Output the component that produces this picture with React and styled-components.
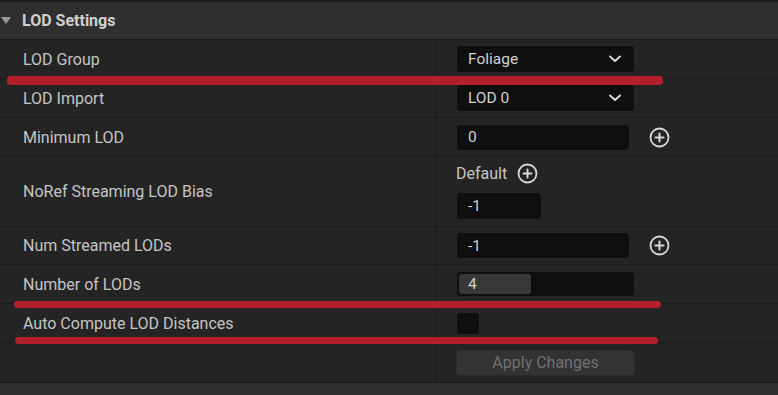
import styled, { createGlobalStyle } from "styled-components";

const GlobalStyle = createGlobalStyle`
  html, body {
    margin: 0;
    padding: 0;
    background: #242424;
  }
  body {
    font-family: Roboto, "Noto Sans", sans-serif;
    color: #c0c0c0;
  }
`;

const Panel = styled.div`
  position: relative;
  width: 778px;
  height: 395px;
  overflow: hidden;
  background: #242424;
  border-top: 2px solid #1c1c1c;
  box-sizing: border-box;
`;

const SectionHeader = styled.div`
  display: flex;
  align-items: center;
  gap: 11px;
  height: ${(p) => p.$height}px;
  padding-left: 1px;
  background: #2f2f2f;
  border-bottom: 1px solid #1b1b1b;
  font-size: 16px;
  font-weight: 700;
  color: #cfcfcf;
  box-sizing: border-box;
`;

const Arrow = styled.span`
  width: 0;
  height: 0;
  border-left: 5px solid transparent;
  border-right: 5px solid transparent;
  border-top: 7px solid #9a9a9a;
`;

const Row = styled.div`
  display: grid;
  grid-template-columns: 437px 1fr;
  height: ${(p) => p.$height}px;
  border-bottom: 1px solid #1b1b1b;
  box-sizing: border-box;
`;

const Label = styled.div`
  display: flex;
  align-items: center;
  padding-left: 23px;
  border-right: 1px solid #1b1b1b;
  font-size: 16px;
  color: #c4c4c4;
`;

const Value = styled.div`
  display: flex;
  flex-direction: ${(p) => (p.$column ? "column" : "row")};
  align-items: ${(p) => (p.$column ? "flex-start" : "center")};
  justify-content: ${(p) => (p.$column ? "center" : "flex-start")};
  gap: ${(p) => (p.$column ? "8px" : "19px")};
  padding-left: 19px;
`;

const Field = styled.div`
  position: relative;
  display: flex;
  align-items: center;
  justify-content: space-between;
  width: ${(p) => p.$width}px;
  height: ${(p) => p.$height || 28}px;
  padding: 0 12px 0 11px;
  background: #0f0f0f;
  border: 1px solid #262626;
  border-radius: 4px;
  box-sizing: border-box;
  font-size: 15.5px;
  color: #d0d0d0;
  overflow: hidden;
`;

const SliderFill = styled.div`
  position: absolute;
  left: 2px;
  top: 2px;
  bottom: 2px;
  background: #383838;
  border-radius: 3px;
`;

const SliderText = styled.span`
  position: relative;
`;

const Checkbox = styled.div`
  width: 24px;
  height: 23px;
  background: #0f0f0f;
  border: 1px solid #262626;
  border-radius: 3px;
  box-sizing: border-box;
`;

const Button = styled.div`
  display: flex;
  align-items: center;
  justify-content: center;
  width: 179px;
  height: 26px;
  background: #333333;
  border: 1px solid #2a2a2a;
  border-radius: 4px;
  box-sizing: border-box;
  font-size: 16px;
  color: #707070;
`;

const DefaultLine = styled.div`
  display: flex;
  align-items: center;
  gap: 10px;
  font-size: 16px;
  color: #c4c4c4;
`;

const Mark = styled.div`
  position: absolute;
  left: ${(p) => p.$left}px;
  top: ${(p) => p.$top}px;
  width: ${(p) => p.$width}px;
  height: ${(p) => p.$height}px;
  background: #b3202c;
  border-radius: 4px;
`;

function Chevron() {
  return (
    <svg width="14" height="10" viewBox="0 0 14 10">
      <path d="M2 2.5 L7 7 L12 2.5" fill="none" stroke="#d4d4d4" strokeWidth="2" strokeLinecap="round" strokeLinejoin="round" />
    </svg>
  );
}

function PlusCircle() {
  return (
    <svg width="21" height="21" viewBox="0 0 21 21">
      <circle cx="10.5" cy="10.5" r="9" fill="none" stroke="#d8d8d8" strokeWidth="1.8" />
      <path d="M10.5 6.5 V14.5 M6.5 10.5 H14.5" stroke="#d8d8d8" strokeWidth="2" strokeLinecap="round" />
    </svg>
  );
}

const rows = [
  { label: "LOD Group", height: 39, kind: "combo", value: "Foliage" },
  { label: "LOD Import", height: 39, kind: "combo", value: "LOD 0" },
  { label: "Minimum LOD", height: 39, kind: "input", value: "0" },
  { label: "NoRef Streaming LOD Bias", height: 70, kind: "default", value: "-1" },
  { label: "Num Streamed LODs", height: 38, kind: "input", value: "-1" },
  { label: "Number of LODs", height: 39, kind: "slider", value: "4" },
  { label: "Auto Compute LOD Distances", height: 39, kind: "check" },
  { label: "", height: 40, kind: "button" },
];

function Widget({ row }) {
  switch (row.kind) {
    case "combo":
      return (
        <Value>
          <Field $width={179}>
            {row.value}
            <Chevron />
          </Field>
        </Value>
      );
    case "input":
      return (
        <Value>
          <Field $width={174} $height={27}>{row.value}</Field>
          <PlusCircle />
        </Value>
      );
    case "default":
      return (
        <Value $column>
          <DefaultLine>
            Default
            <PlusCircle />
          </DefaultLine>
          <Field $width={86} $height={28}>{row.value}</Field>
        </Value>
      );
    case "slider":
      return (
        <Value>
          <Field $width={179} $height={26}>
            <SliderFill style={{ width: 72 }} />
            <SliderText>{row.value}</SliderText>
          </Field>
        </Value>
      );
    case "check":
      return (
        <Value>
          <Checkbox />
        </Value>
      );
    default:
      return (
        <Value>
          <Button>Apply Changes</Button>
        </Value>
      );
  }
}

export default function App() {
  return (
    <>
      <GlobalStyle />
      <Panel>
        <SectionHeader $height={38}>
          <Arrow />
          LOD Settings
        </SectionHeader>
        {rows.map((row, i) => (
          <Row key={i} $height={row.height}>
            <Label>{row.label}</Label>
            <Widget row={row} />
          </Row>
        ))}
        <SectionHeader $height={40}>
          <Arrow />
          General Settings
        </SectionHeader>
        <Mark $left={7} $top={74} $width={656} $height={9} />
        <Mark $left={14} $top={299} $width={647} $height={7} />
        <Mark $left={15} $top={335} $width={643} $height={7} />
      </Panel>
    </>
  );
}
